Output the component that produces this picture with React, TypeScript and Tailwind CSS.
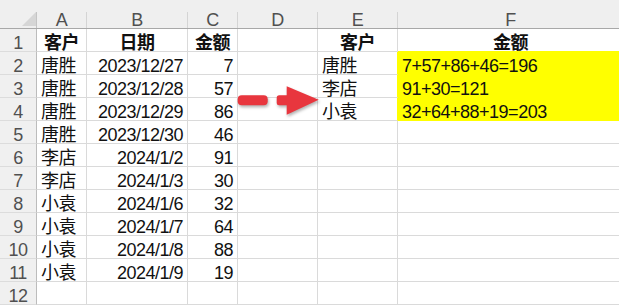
import React from "react";

type Align = "left" | "right" | "center";

const COLS = ["A", "B", "C", "D", "E", "F", ""];
const WIDTHS = ["w-[50px]", "w-[101px]", "w-[50px]", "w-[80px]", "w-[80px]", "w-[226px]", "w-[100px]"];

type CellData = { t?: string; a?: Align; b?: boolean; y?: boolean };

const rows: CellData[][] = [
  [
    { t: "客户", a: "center", b: true },
    { t: "日期", a: "center", b: true },
    { t: "金额", a: "center", b: true },
    {},
    { t: "客户", a: "center", b: true },
    { t: "金额", a: "center", b: true },
    {},
  ],
  [
    { t: "唐胜" },
    { t: "2023/12/27", a: "right" },
    { t: "7", a: "right" },
    {},
    { t: "唐胜" },
    { t: "7+57+86+46=196", y: true },
    {},
  ],
  [
    { t: "唐胜" },
    { t: "2023/12/28", a: "right" },
    { t: "57", a: "right" },
    {},
    { t: "李店" },
    { t: "91+30=121", y: true },
    {},
  ],
  [
    { t: "唐胜" },
    { t: "2023/12/29", a: "right" },
    { t: "86", a: "right" },
    {},
    { t: "小袁" },
    { t: "32+64+88+19=203", y: true },
    {},
  ],
  [{ t: "唐胜" }, { t: "2023/12/30", a: "right" }, { t: "46", a: "right" }, {}, {}, {}, {}],
  [{ t: "李店" }, { t: "2024/1/2", a: "right" }, { t: "91", a: "right" }, {}, {}, {}, {}],
  [{ t: "李店" }, { t: "2024/1/3", a: "right" }, { t: "30", a: "right" }, {}, {}, {}, {}],
  [{ t: "小袁" }, { t: "2024/1/6", a: "right" }, { t: "32", a: "right" }, {}, {}, {}, {}],
  [{ t: "小袁" }, { t: "2024/1/7", a: "right" }, { t: "64", a: "right" }, {}, {}, {}, {}],
  [{ t: "小袁" }, { t: "2024/1/8", a: "right" }, { t: "88", a: "right" }, {}, {}, {}, {}],
  [{ t: "小袁" }, { t: "2024/1/9", a: "right" }, { t: "19", a: "right" }, {}, {}, {}, {}],
  [{}, {}, {}, {}, {}, {}, {}],
];

function alignClass(a?: Align) {
  if (a === "right") return "justify-end pr-[4px]";
  if (a === "center") return "justify-center";
  return "justify-start pl-[4px]";
}

function Arrow() {
  return (
    <svg
      className="absolute left-[236px] top-[80px] drop-shadow-[1px_2px_1.5px_rgba(0,0,0,0.3)]"
      width="88"
      height="44"
      viewBox="0 0 88 44"
    >
      <rect x="1.7" y="15.3" width="30" height="10" rx="4" fill="#e8363e" />
      <rect x="40.7" y="15.3" width="13" height="10" rx="2.5" fill="#e8363e" />
      <polygon points="50.7,6.3 50.7,34.7 82.7,19.8" fill="#e8363e" />
    </svg>
  );
}

export default function App() {
  return (
    <div className="relative w-[619px] h-[305px] overflow-hidden bg-white font-['Liberation_Sans','Noto_Sans_CJK_SC',sans-serif] text-[18px] tracking-[-0.5px] text-[#111]">
      {/* column header */}
      <div className="flex h-[29px] bg-[#efefef] border-b border-[#a8a8a8]">
        <div className="w-[37px] shrink-0 pt-[12px]">
          <div className="h-[16px] border-r border-[#c4c4c4] flex justify-end items-end pb-[2px]">
            <svg width="14" height="14" viewBox="0 0 14 14">
              <polygon points="14,0 14,14 0,14" fill="#d6d6d6" />
            </svg>
          </div>
        </div>
        {COLS.map((c, i) => (
          <div key={i} className={`${WIDTHS[i]} shrink-0 pt-[12px]`}>
            <div className="h-[16px] border-r border-[#d4d4d4] flex items-end justify-center leading-[16px] text-[#505050]">
              {c}
            </div>
          </div>
        ))}
      </div>
      {rows.map((r, ri) => (
        <div key={ri} className="flex h-[23px]">
          <div className="w-[37px] shrink-0 h-[23px] bg-[#f0f0f0] border-r border-b border-r-[#bcbcbc] border-b-[#dcdcdc] flex items-end justify-center leading-[16px] text-[#505050]">
            {ri + 1}
          </div>
          {r.map((c, ci) => {
            const nextYellow = r[ci + 1]?.y;
            const belowYellow = rows[ri + 1]?.[ci]?.y;
            const bg = c.y ? "bg-[#ffff00]" : "bg-white";
            const br = c.y || nextYellow ? "border-r-[#ffff00]" : "border-r-[#dadada]";
            const bb = c.y || belowYellow ? "border-b-[#ffff00]" : "border-b-[#dadada]";
            return (
              <div
                key={ci}
                className={`${WIDTHS[ci]} shrink-0 h-[23px] border-r border-b ${br} ${bb} ${bg} flex items-end ${alignClass(
                  c.a
                )} leading-[16px] whitespace-nowrap ${c.b ? "font-bold" : ""}`}
              >
                {c.t}
              </div>
            );
          })}
        </div>
      ))}
      <div className="flex h-[23px]">
        <div className="w-[37px] shrink-0 h-[23px] bg-[#f0f0f0] border-r border-[#bcbcbc]" />
      </div>
      <Arrow />
    </div>
  );
}
